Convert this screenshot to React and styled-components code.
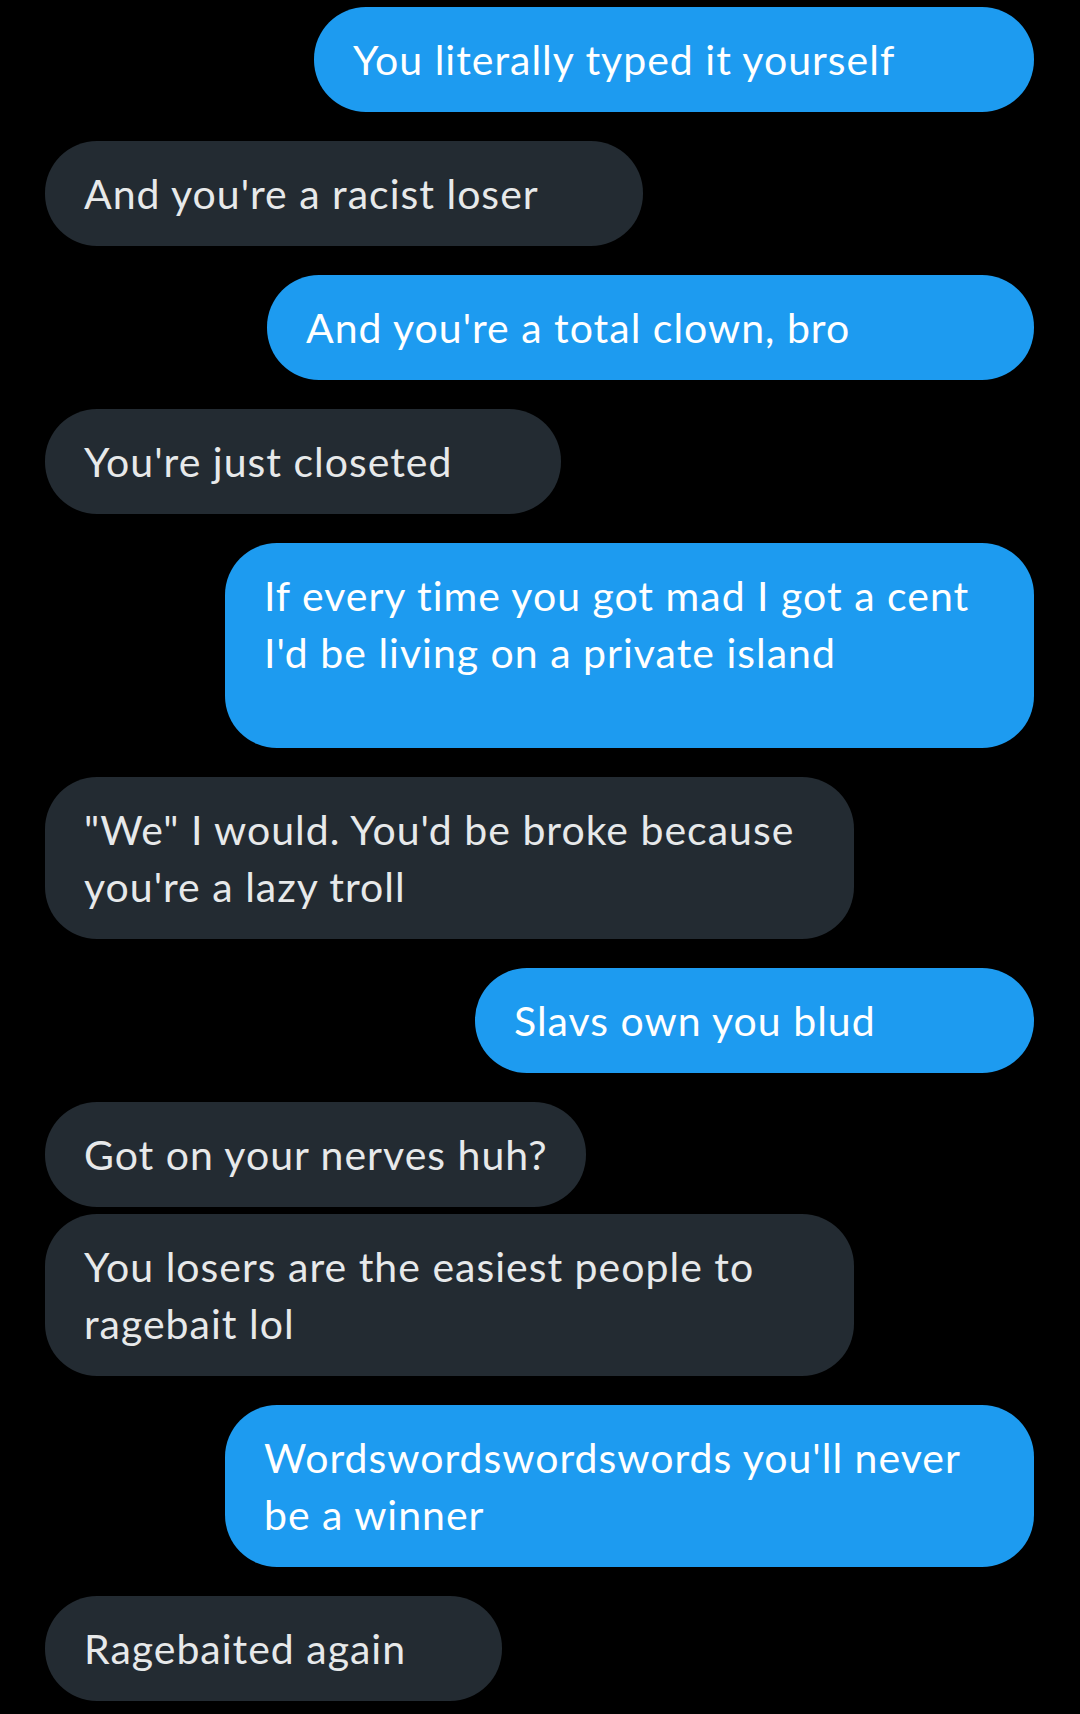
import React from 'react';
import styled, { createGlobalStyle } from 'styled-components';

const GlobalStyle = createGlobalStyle`
  html, body {
    margin: 0;
    padding: 0;
    background: #000;
  }
  body {
    font-family: Lato, "Open Sans", sans-serif;
    -webkit-font-smoothing: antialiased;
  }
`;

const Thread = styled.div`
  width: 1080px;
  min-height: 1714px;
  box-sizing: border-box;
  padding: 7px 46px 0 45px;
  background: #000;
  display: flex;
  flex-direction: column;
`;

const Bubble = styled.div`
  box-sizing: border-box;
  width: ${(p) => p.$w}px;
  align-self: ${(p) => (p.$mine ? 'flex-end' : 'flex-start')};
  margin-top: ${(p) => (p.$first ? 0 : p.$grouped ? 7 : 29)}px;
  padding: 24px 30px ${(p) => 24 + (p.$extra || 0)}px 39px;
  border-radius: 52px;
  background: ${(p) => (p.$mine ? '#1d9bf0' : '#232b32')};
  color: ${(p) => (p.$mine ? '#ffffff' : '#e7e9ea')};
  font-size: 41px;
  letter-spacing: 1px;
  line-height: 57px;
  white-space: nowrap;
`;

const messages = [
  { mine: true, w: 720, text: ['You literally typed it yourself'] },
  { w: 598, text: ["And you're a racist loser"] },
  { mine: true, w: 767, text: ["And you're a total clown, bro"] },
  { w: 516, text: ["You're just closeted"] },
  {
    mine: true,
    w: 809,
    extra: 43,
    text: ['If every time you got mad I got a cent', "I'd be living on a private island"],
  },
  { w: 809, text: ['"We" I would. You\'d be broke because', "you're a lazy troll"] },
  { mine: true, w: 559, text: ['Slavs own you blud'] },
  { w: 541, text: ['Got on your nerves huh?'] },
  { w: 809, grouped: true, text: ['You losers are the easiest people to', 'ragebait lol'] },
  { mine: true, w: 809, text: ["Wordswordswordswords you'll never", 'be a winner'] },
  { w: 457, text: ['Ragebaited again'] },
];

const App = () => {
  return (
    <>
      <GlobalStyle />
      <Thread>
        {messages.map((m, i) => (
          <Bubble
            key={i}
            $mine={m.mine}
            $w={m.w}
            $first={i === 0}
            $grouped={m.grouped}
            $extra={m.extra}
          >
            {m.text.map((line, j) => (
              <div key={j}>{line}</div>
            ))}
          </Bubble>
        ))}
      </Thread>
    </>
  );
};

export default App;
